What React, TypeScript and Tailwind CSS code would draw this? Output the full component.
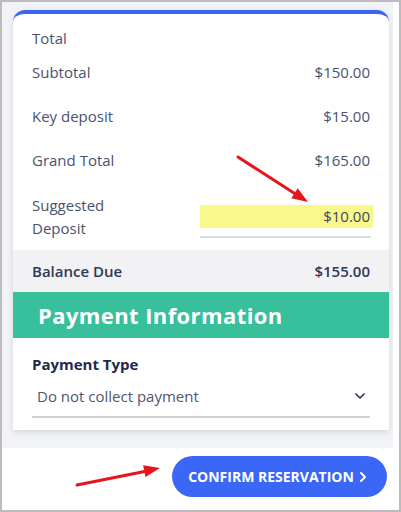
import { ChevronDown, ChevronRight } from 'lucide-react';

const rows = [
  { label: 'Subtotal', value: '$150.00', cls: 'h-10' },
  { label: 'Key deposit', value: '$15.00', cls: 'mt-1 h-10' },
  { label: 'Grand Total', value: '$165.00', cls: 'mt-1 h-10' },
];

export default function App() {
  return (
    <div className="relative w-[401px] h-[512px] border-2 border-[#bcbcbc] bg-white flex flex-col font-['Open_Sans',sans-serif]">
      {/* gray page area */}
      <div className="mr-[6px] bg-[#f2f3f6] pl-[11px] pr-[4px] pt-2 pb-[18px]">
        <div className="bg-white rounded-t-[12px] border-t-4 border-[#3b65f2] shadow-[0_2px_6px_rgba(0,0,0,0.12)]">
          <div className="px-[19px] pt-[10px] pb-[10px] text-[15px] text-[#4a5270]">
            <div className="h-7 flex items-center">Total</div>
            {rows.map((r) => (
              <div key={r.label} className={`${r.cls} flex items-center justify-between`}>
                <span>{r.label}</span>
                <span>{r.value}</span>
              </div>
            ))}
            <div className="mt-[14px] flex justify-between items-start">
              <div className="leading-[23px]">
                Suggested
                <br />
                Deposit
              </div>
              <div className="pt-[11px] w-[173px] -mr-[3px]">
                <div className="h-[23px] bg-[#f9f98b] flex items-center justify-end pr-[3px] text-[#3f4560]">
                  $10.00
                </div>
                <div className="mt-2 h-[2px] bg-[#d9dbe0] mr-[2px]" />
              </div>
            </div>
          </div>

          <div className="h-[42px] bg-[#f2f2f4] px-[19px] flex items-center justify-between text-[15px] font-semibold text-[#2f3855]">
            <span>Balance Due</span>
            <span>$155.00</span>
          </div>

          <div className="h-[46px] bg-[#38bf9c] pl-[25px] flex items-center text-white text-[22px] font-bold tracking-[0.4px]">
            Payment Information
          </div>

          <div className="px-[19px] pt-4 pb-3">
            <div className="h-5 flex items-center text-[15px] font-bold text-[#1f2a4d]">Payment Type</div>
            <div className="mt-3 pl-[5px] pr-[2px] pb-[10px] border-b-2 border-[#cfd1d6] flex items-center justify-between">
              <span className="h-5 flex items-center text-[15px] text-[#4f566e]">Do not collect payment</span>
              <ChevronDown className="w-4 h-4 text-[#2a3150]" strokeWidth={2.5} />
            </div>
          </div>
        </div>
      </div>

      {/* action bar */}
      <div className="flex justify-end pr-3 pt-2">
        <button className="w-[215px] h-[41px] rounded-full bg-[#3a67f6] text-white text-[14px] font-bold flex items-center justify-center gap-[1px]">
          CONFIRM RESERVATION
          <ChevronRight className="w-4 h-4" strokeWidth={3} />
        </button>
      </div>

      {/* annotation arrows */}
      <svg className="absolute -left-[2px] -top-[2px] pointer-events-none" width="401" height="512">
        <line x1="238" y1="157" x2="297" y2="195" stroke="#e8141b" strokeWidth="3" strokeLinecap="round" />
        <polygon points="308,202 291.3,198.3 297.7,188.3" fill="#e8141b" />
        <line x1="77" y1="485" x2="147" y2="471" stroke="#e8141b" strokeWidth="3" strokeLinecap="round" />
        <polygon points="160,468 145.5,477.1 143.1,465.3" fill="#e8141b" />
      </svg>
    </div>
  );
}
